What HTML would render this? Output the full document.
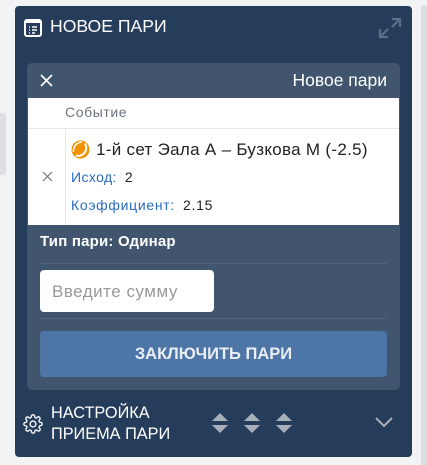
<!DOCTYPE html><html><head><meta charset="utf-8"><style>
body{margin:0;width:427px;height:465px;background:#f2f3f5;font-family:"Liberation Sans",sans-serif;position:relative;overflow:hidden}
.a{position:absolute;white-space:nowrap}
</style></head><body>
<div class="a" style="left:0;top:113px;width:6px;height:62px;background:#dcdfe3;border-radius:0 3px 3px 0"></div>
<div class="a" style="left:421px;top:5px;width:6px;height:460px;background:#dcdfe3;border-radius:3px 0 0 0"></div>
<div class="a" style="left:15px;top:6px;width:397px;height:451px;background:#253d5b;border-radius:4px"></div>
<svg class="a" style="left:24px;top:19px" width="18" height="18" viewBox="0 0 18 18"><rect x="1" y="1" width="16" height="16" rx="2" fill="none" stroke="#fff" stroke-width="2"/><rect x="1" y="1" width="16" height="3" fill="#fff"/><path d="M5 8h1M8 8h5M5 11h1M8 11h5M5 14h1M8 14h3" stroke="#fff" stroke-width="1.6"/></svg>
<div class="a" style="left:50px;top:16px;color:#fff;font-size:17.6px">НОВОЕ ПАРИ</div>
<svg class="a" style="left:378px;top:17px" width="24" height="22" viewBox="0 0 24 22"><path d="M14 2h8v8M22 2l-8 8M2 12v8h8M2 20l8-8" stroke="#5a6f88" stroke-width="2.2" fill="none"/></svg>
<div class="a" style="left:27px;top:63px;width:373px;height:327px;background:#41556f;border-radius:5px"></div>
<svg class="a" style="left:40px;top:74px" width="13" height="13"><path d="M1 1l11 11M12 1L1 12" stroke="#fff" stroke-width="1.6"/></svg>
<div class="a" style="right:40px;top:70px;color:#fff;font-size:17.5px">Новое пари</div>
<div class="a" style="left:28px;top:98px;width:371px;height:127px;background:#fff"></div>
<div class="a" style="left:28px;top:128px;width:371px;height:1px;background:#e6e9ee"></div>
<div class="a" style="left:65px;top:129px;width:1px;height:96px;background:#e6e9ee"></div>
<div class="a" style="left:65px;top:104px;color:#6b7380;font-size:14px;letter-spacing:0.6px">Событие</div>
<svg class="a" style="left:42px;top:171px" width="11" height="11"><path d="M1 1l9 9M10 1L1 10" stroke="#6b7380" stroke-width="1.2"/></svg>
<svg class="a" style="left:71px;top:140px" width="19" height="19" viewBox="0 0 19 19"><circle cx="9.5" cy="9.5" r="9" fill="#f39200"/><path d="M14 3.5A8 8 0 0 1 5 15.5" stroke="#fff" stroke-width="2" fill="none"/><path d="M11 2A9 9 0 0 0 2.5 12" stroke="#fff" stroke-width="1.6" fill="none"/></svg>
<div class="a" style="left:96px;top:140px;color:#222;font-size:17px;letter-spacing:0.3px">1-й сет Эала А – Бузкова М (-2.5)</div>
<div class="a" style="left:71px;top:169px;font-size:14px;color:#2a6bc0;letter-spacing:0.4px">Исход:<span style="color:#222;margin-left:8px">2</span></div>
<div class="a" style="left:71px;top:197px;font-size:14px;color:#2a6bc0;letter-spacing:0.7px">Коэффициент:<span style="color:#222;margin-left:8px">2.15</span></div>
<div class="a" style="left:40px;top:233px;color:#fff;font-size:15px;font-weight:bold;letter-spacing:0.2px">Тип пари: Одинар</div>
<div class="a" style="left:40px;top:263px;width:347px;height:1px;background:#51647d"></div>
<div class="a" style="left:40px;top:270px;width:174px;height:42px;background:#fff;border-radius:4px"></div>
<div class="a" style="left:52px;top:282px;color:#999;font-size:17px;letter-spacing:0.5px">Введите сумму</div>
<div class="a" style="left:40px;top:318px;width:347px;height:1px;background:#51647d"></div>
<div class="a" style="left:40px;top:331px;width:347px;height:46px;background:#4d75a6;border-radius:4px;color:#e9eef5;font-size:16.5px;font-weight:bold;text-align:center;line-height:46px">ЗАКЛЮЧИТЬ ПАРИ</div>
<svg class="a" style="left:23px;top:414px" width="20" height="20" viewBox="0 0 24 24"><path d="M12 15.5a3.5 3.5 0 1 0 0-7 3.5 3.5 0 0 0 0 7z" fill="none" stroke="#fff" stroke-width="1.6"/><path d="M19.4 15a1.7 1.7 0 0 0 .3 1.8l.1.1a2 2 0 1 1-2.8 2.8l-.1-.1a1.7 1.7 0 0 0-1.8-.3 1.7 1.7 0 0 0-1 1.5V21a2 2 0 1 1-4 0v-.1a1.7 1.7 0 0 0-1.1-1.5 1.7 1.7 0 0 0-1.8.3l-.1.1a2 2 0 1 1-2.8-2.8l.1-.1a1.7 1.7 0 0 0 .3-1.8 1.7 1.7 0 0 0-1.5-1H3a2 2 0 1 1 0-4h.1a1.7 1.7 0 0 0 1.5-1.1 1.7 1.7 0 0 0-.3-1.8l-.1-.1a2 2 0 1 1 2.8-2.8l.1.1a1.7 1.7 0 0 0 1.8.3H9a1.7 1.7 0 0 0 1-1.5V3a2 2 0 1 1 4 0v.1a1.7 1.7 0 0 0 1 1.5 1.7 1.7 0 0 0 1.8-.3l.1-.1a2 2 0 1 1 2.8 2.8l-.1.1a1.7 1.7 0 0 0-.3 1.8V9a1.7 1.7 0 0 0 1.5 1H21a2 2 0 1 1 0 4h-.1a1.7 1.7 0 0 0-1.5 1z" fill="none" stroke="#fff" stroke-width="1.6"/></svg>
<div class="a" style="left:51px;top:403px;color:#fff;font-size:16.3px;line-height:21px">НАСТРОЙКА<br>ПРИЕМА ПАРИ</div>
<svg class="a" style="left:210px;top:412px" width="84" height="24"><g fill="#a9b0bb"><path d="M2 9l8-8 8 8z M2 13h16l-8 8z"/><path d="M34 9l8-8 8 8z M34 13h16l-8 8z"/><path d="M66 9l8-8 8 8z M66 13h16l-8 8z"/></g></svg>
<svg class="a" style="left:375px;top:417px" width="19" height="12"><path d="M1 1l8 8 8-8" stroke="#a9b0bb" stroke-width="2" fill="none"/></svg>
</body></html>
